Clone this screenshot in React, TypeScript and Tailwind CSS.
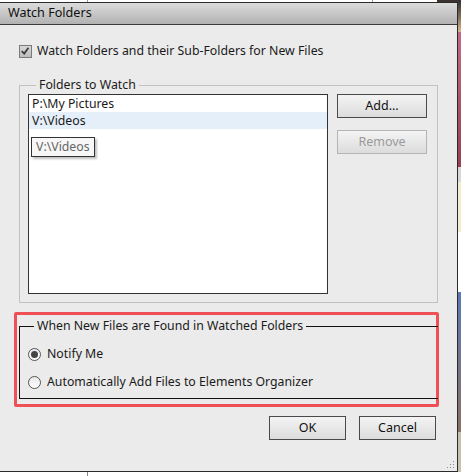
import React from 'react'

const ui = { fontFamily: '"Noto Sans", "DejaVu Sans", sans-serif' }

function CheckBox() {
  return (
    <span className="relative inline-block w-[13px] h-[13px] border border-[#7a7a7a] bg-gradient-to-b from-[#d8d8d8] to-[#bcbcbc]">
      <svg viewBox="0 0 13 13" className="absolute left-0 top-0 w-[11px] h-[11px]">
        <path d="M2 6 L5 9 L10 2" fill="none" stroke="#3a3a3a" strokeWidth={2} />
      </svg>
    </span>
  )
}

function Radio({ checked }: { checked?: boolean }) {
  return (
    <span className="flex items-center justify-center w-[13px] h-[13px] rounded-full border border-[#555] bg-gradient-to-b from-[#e8e8e8] to-white">
      {checked && <span className="w-[7px] h-[7px] rounded-full bg-[#444]" />}
    </span>
  )
}

function Btn({ label, disabled, w }: { label: string; disabled?: boolean; w: string }) {
  return (
    <button
      className={
        'h-[24px] text-[12.5px] leading-none border bg-gradient-to-b from-[#f4f4f4] to-[#dcdcdc] ' +
        w +
        (disabled ? ' border-[#b4b4b4] text-[#9a9a9a]' : ' border-[#4a4a4a] text-[#111]')
      }
    >
      {label}
    </button>
  )
}

export default function App() {
  return (
    <div className="w-[461px] h-[476px] overflow-hidden bg-white flex flex-col text-[#1a1a1a]" style={ui}>
      {/* strip of the window behind, above the dialog */}
      <div className="h-[2px] flex shrink-0">
        <div className="w-[88px] border-r border-[#999] bg-white" />
        <div className="w-[285px] border-r border-[#999] bg-white" />
        <div className="w-[64px] bg-white" />
        <div className="flex-1 bg-[#3a3330]" />
      </div>

      <div className="flex h-[470px] shrink-0">
        {/* dialog */}
        <div className="w-[458px] flex flex-col border-t border-r border-b border-[#2a2a2a] bg-[#ebebeb]">
          <div className="h-[22px] shrink-0 flex items-center pl-[8px] border-b border-[#3c3c3c] bg-gradient-to-b from-[#dcdcdc] to-[#b2b2b2] text-[12.6px] text-[#111]">
            Watch Folders
          </div>

          <div className="relative flex-1 pl-[14px] text-[12.3px]">
            <label className="ml-[5px] mt-[18px] flex items-center gap-[5px] h-[16px]">
              <CheckBox />
              <span>Watch Folders and their Sub-Folders for New Files</span>
            </label>

            <fieldset className="ml-[5px] mt-[18px] w-[419px] h-[226px] border border-[#c2c2c2] pl-[8px] pr-[10px] pb-[8px] flex">
              <legend className="ml-[8px] px-[3px] leading-[16px]">Folders to Watch</legend>
              <div className="flex gap-[9px] w-full mt-[1px]">
                <div className="relative w-[300px] h-[200px] border border-[#333] bg-white">
                  <div className="h-[17px] pl-[3px] leading-[18px]">P:\My Pictures</div>
                  <div className="h-[17px] pl-[3px] leading-[18px] bg-[#e4eff9]">V:\Videos</div>
                  <div className="ml-[2px] mt-[8px] inline-block h-[20px] px-[4px] leading-[18px] border border-[#333] bg-[#f7f7f7] text-[#666] shadow-[2px_2px_2px_rgba(0,0,0,0.25)]">
                    V:\Videos
                  </div>
                </div>
                <div className="flex flex-col gap-[12px]">
                  <Btn label="Add..." w="w-[90px]" />
                  <Btn label="Remove" w="w-[90px]" disabled />
                </div>
              </div>
            </fieldset>

            <div className="mt-[9px] w-[425px] h-[95px] border-[3px] border-[#ee5055] rounded-[2px] pl-[2px] pt-[3px]">
              <fieldset className="w-[419px] h-[81px] border-l border-t border-b border-[#111] pl-[8px] flex flex-col">
                <legend className="ml-[6px] px-[3px] leading-[16px]">
                  When New Files are Found in Watched Folders
                </legend>
                <label className="flex items-center gap-[6px] mt-[12px] h-[16px]">
                  <Radio checked />
                  <span>Notify Me</span>
                </label>
                <label className="flex items-center gap-[6px] mt-[12px] h-[16px]">
                  <Radio />
                  <span>Automatically Add Files to Elements Organizer</span>
                </label>
              </fieldset>
            </div>

            <div className="mt-[9px] w-[422px] flex justify-end gap-[13px]">
              <Btn label="OK" w="w-[77px]" />
              <Btn label="Cancel" w="w-[77px]" />
            </div>

            {/* size grip */}
            <svg className="absolute right-[2px] bottom-[2px]" width="8" height="8" viewBox="0 0 8 8">
              <g fill="#8a8a8a">
                <rect x="6" y="0" width="1" height="1" />
                <rect x="3" y="3" width="1" height="1" />
                <rect x="6" y="3" width="1" height="1" />
                <rect x="0" y="6" width="1" height="1" />
                <rect x="3" y="6" width="1" height="1" />
                <rect x="6" y="6" width="1" height="1" />
              </g>
            </svg>
          </div>
        </div>

        {/* photo edge of the window behind */}
        <div className="flex-1 flex flex-col">
          <div className="h-[30px] bg-gradient-to-b from-[#3a3330] to-[#d8b890]" />
          <div className="h-[135px] bg-gradient-to-b from-[#c46a86] to-[#9a4050]" />
          <div className="h-[15px] bg-[#d8d8d8]" />
          <div className="h-[50px] bg-[#f4ecd0]" />
          <div className="h-[60px] bg-white" />
          <div className="h-[140px] bg-gradient-to-b from-[#5a78b8] to-[#8a7060]" />
          <div className="flex-1 bg-[#c8c0b0]" />
        </div>
      </div>

      <div className="flex-1 flex">
        <div className="w-[88px] border-r border-[#888]" />
        <div className="flex-1" />
      </div>
    </div>
  )
}
